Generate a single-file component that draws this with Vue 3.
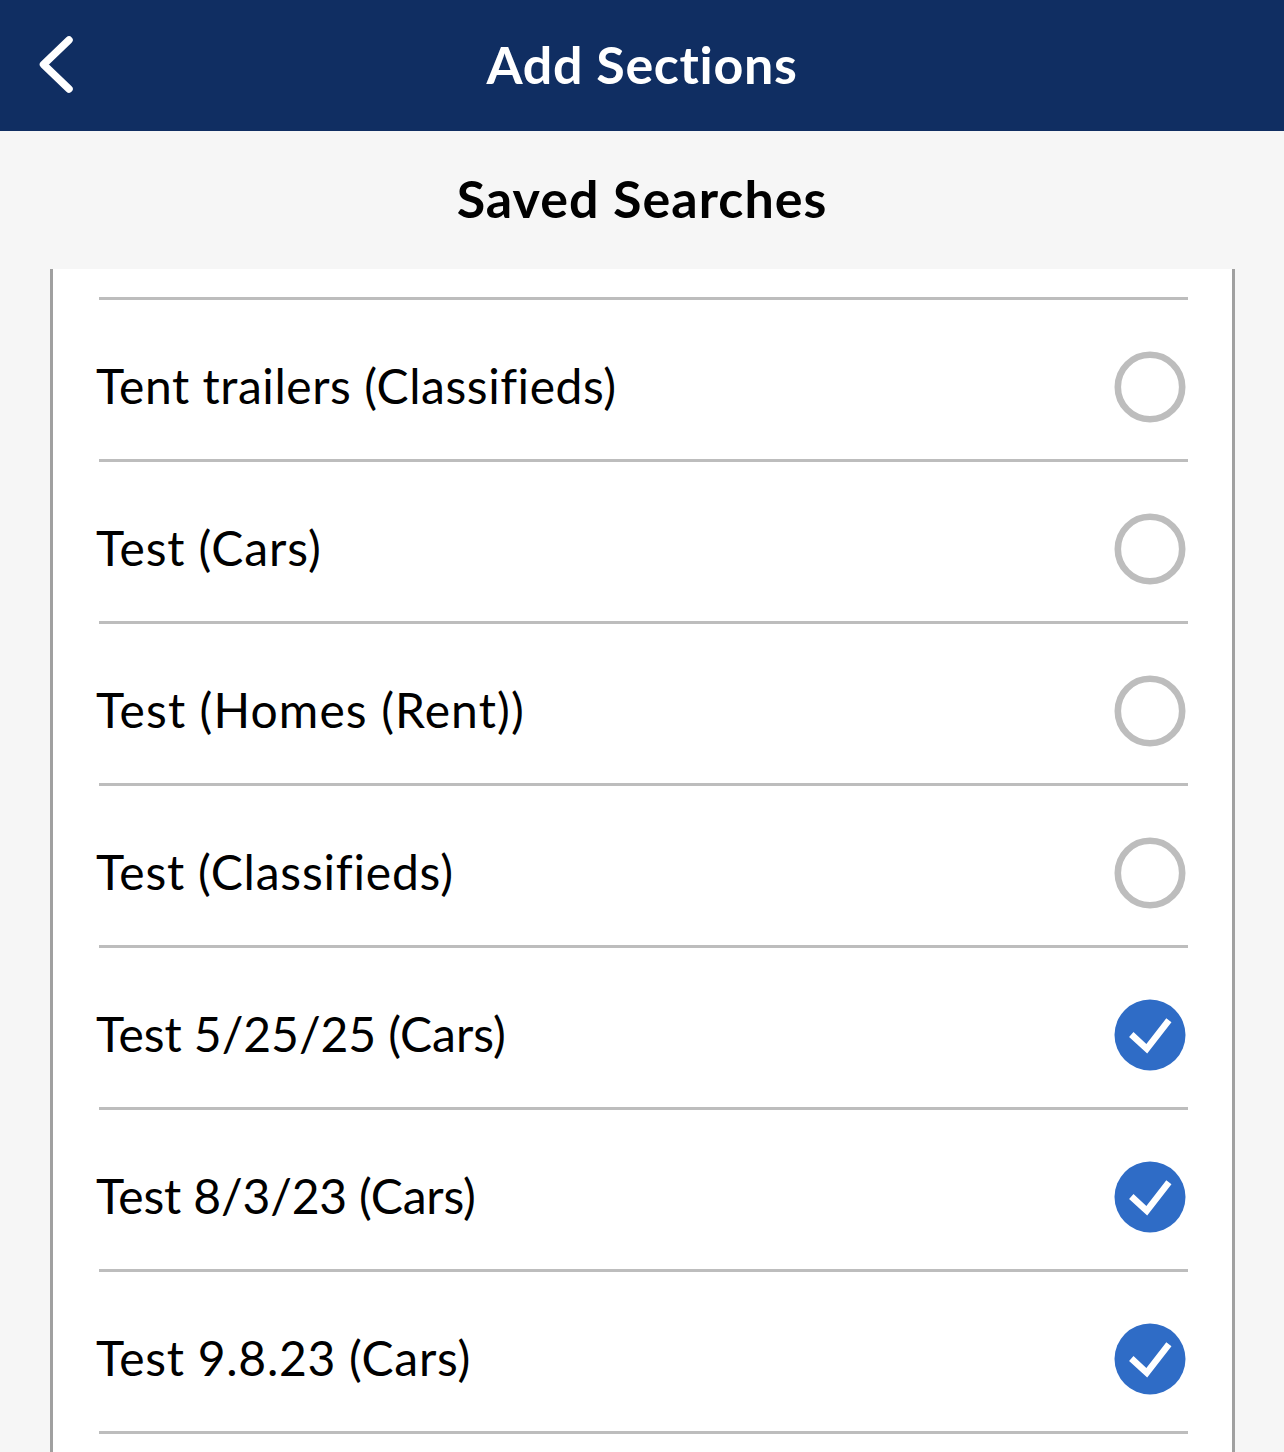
<template>
  <div class="screen">
    <header class="top-bar">
      <button class="back" aria-label="Back">
        <svg width="36" height="58" viewBox="0 0 36 58">
          <path d="M32 5 L6.5 29.5 L32 54" fill="none" stroke="#fff" stroke-width="7.5" stroke-linecap="round" stroke-linejoin="round" />
        </svg>
      </button>
      <h1>Add Sections</h1>
    </header>
    <h2 class="sub-title">Saved Searches</h2>
    <div class="card">
      <div v-for="item in searches" :key="item.name" class="row">
        <span class="name" :style="{ letterSpacing: item.track + 'px' }">{{ item.name }}</span>
        <svg v-if="item.checked" class="mark" width="72" height="72" viewBox="0 0 72 72">
          <circle cx="36" cy="36" r="35.5" fill="#2f6cc6" />
          <path d="M17.3 35.5 L32.8 49.8 L54.9 21.2" fill="none" stroke="#fff" stroke-width="6.5" />
        </svg>
        <svg v-else class="mark" width="72" height="72" viewBox="0 0 72 72">
          <circle cx="36" cy="36" r="32.2" fill="none" stroke="#bdbdbd" stroke-width="6.6" />
        </svg>
      </div>
    </div>
  </div>
</template>

<script setup>
const searches = [
  { name: 'Tent trailers (Classifieds)', checked: false, track: 0.55 },
  { name: 'Test (Cars)', checked: false, track: 0.9 },
  { name: 'Test (Homes (Rent))', checked: false, track: 1.1 },
  { name: 'Test (Classifieds)', checked: false, track: 0.8 },
  { name: 'Test 5/25/25 (Cars)', checked: true, track: -0.05 },
  { name: 'Test 8/3/23 (Cars)', checked: true, track: -0.17 },
  { name: 'Test 9.8.23 (Cars)', checked: true, track: 0.72 }
]
</script>

<style scoped>
.screen {
  height: 1452px;
  overflow: hidden;
  background: #f6f6f6;
  font-family: Lato, "Noto Sans", sans-serif;
  color: #000;
}
.top-bar {
  position: relative;
  height: 131px;
  background: #102e62;
  display: flex;
  align-items: center;
  justify-content: center;
}
.top-bar h1 {
  margin: 0 0 4px;
  font-size: 52px;
  font-weight: 700;
  letter-spacing: 0.65px;
  color: #fff;
}
.back {
  position: absolute;
  left: 37px;
  top: 35px;
  padding: 0;
  border: 0;
  background: none;
  line-height: 0;
}
.sub-title {
  margin: 0;
  height: 138px;
  line-height: 134px;
  text-align: center;
  font-size: 52px;
  font-weight: 700;
  letter-spacing: 1px;
}
.card {
  margin: 0 49px 0 50px;
  padding: 28px 44px 0 46px;
  height: 1183px;
  box-sizing: border-box;
  background: #fff;
  border-left: 3px solid #a0a0a0;
  border-right: 3px solid #a0a0a0;
}
.row {
  height: 162px;
  box-sizing: border-box;
  border-top: 3px solid #bdbdbd;
  display: flex;
  align-items: center;
  justify-content: space-between;
  padding: 15px 2.5px 0 0;
}
.row:last-child {
  border-bottom: 3px solid #bdbdbd;
  height: 165px;
}
.name {
  margin: 0 0 4px -3px;
  font-size: 48px;
}
</style>
